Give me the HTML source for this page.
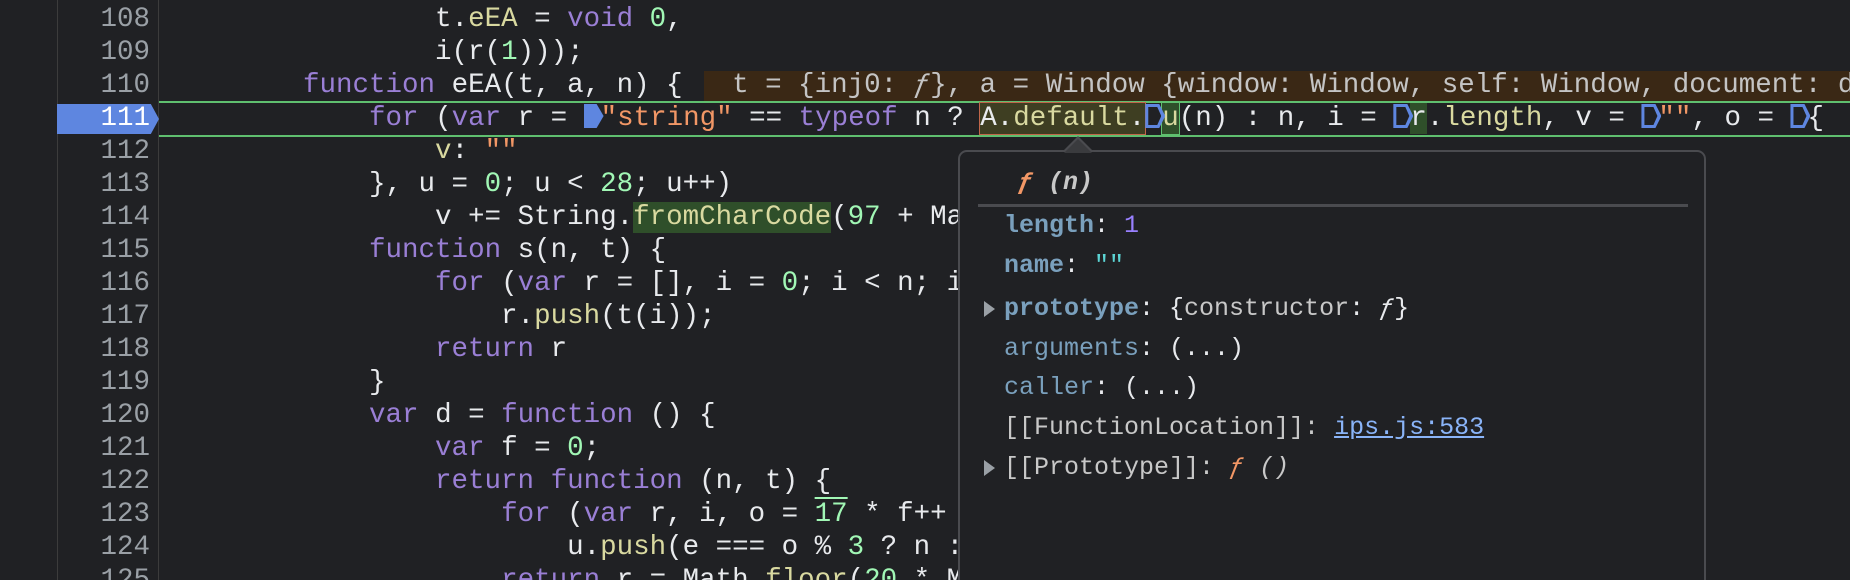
<!DOCTYPE html>
<html style="width:1850px;height:580px;overflow:hidden"><head><meta charset="utf-8"><style>
*{margin:0;padding:0;box-sizing:border-box}
body{width:1850px;height:580px;overflow:hidden;background:#202124;position:relative;font-family:"Liberation Mono",monospace;font-size:27.5px;color:#e8eaed}
.g{position:absolute;left:57px;top:0;width:102px;height:580px;border-left:1px solid #3c3c3c;border-right:1px solid #3c3c3c}
.ln{position:absolute;left:57px;width:93px;text-align:right;color:#9aa0a6;height:33px;line-height:33px}
.l{position:absolute;left:171px;white-space:pre;height:33px;line-height:33px}
.k{color:#9a7fd5}.s{color:#f29766}.p{color:#d9d9a0}.n{color:#a1f7b5}
.m{display:inline-block;width:20px;height:24px;background:#5e86e0;clip-path:polygon(0 0,65% 0,100% 50%,65% 100%,0 100%);vertical-align:-3px;margin-right:-3px}
.mo{display:inline-block;width:20px;height:24px;background:#5e86e0;clip-path:polygon(0 0,70% 0,100% 50%,70% 100%,0 100%,0 0,3px 3px,3px calc(100% - 3px),calc(70% - 2px) calc(100% - 3px),calc(100% - 4px) 50%,calc(70% - 2px) 3px,3px 3px);vertical-align:-3px;margin-right:-3px}
.pop{position:absolute;left:958px;top:150px;width:748px;height:440px;background:#202124;border:2px solid #4a4b4f;border-radius:9px;z-index:5}
.pl{position:absolute;left:44px;white-space:pre;font-size:25px;line-height:30px}
.key{color:#7aa0bd;font-weight:bold}.key2{color:#7aa0bd}
.tri{position:absolute;left:24px;width:0;height:0;border-top:8px solid transparent;border-bottom:8px solid transparent;border-left:11px solid #9aa0a6}
</style></head><body>
<div class="g"></div>
<div style="position:absolute;left:57px;top:104px;width:102px;height:30px;background:#5e86e0;clip-path:polygon(0 0,92% 0,100% 50%,92% 100%,0 100%)"></div>
<div style="position:absolute;left:159px;top:101px;right:0;height:2px;background:#5fbf6f"></div>
<div style="position:absolute;left:159px;top:135px;right:0;height:2px;background:#5fbf6f"></div>
<div style="position:absolute;left:704px;top:71px;right:0;height:30px;background:#3a2815"></div>

<div class="ln" style="top:3px">108</div>
<div class="ln" style="top:36px">109</div>
<div class="ln" style="top:69px">110</div>
<div class="ln" style="top:102px;color:#fff">111</div>
<div class="ln" style="top:135px">112</div>
<div class="ln" style="top:168px">113</div>
<div class="ln" style="top:201px">114</div>
<div class="ln" style="top:234px">115</div>
<div class="ln" style="top:267px">116</div>
<div class="ln" style="top:300px">117</div>
<div class="ln" style="top:333px">118</div>
<div class="ln" style="top:366px">119</div>
<div class="ln" style="top:399px">120</div>
<div class="ln" style="top:432px">121</div>
<div class="ln" style="top:465px">122</div>
<div class="ln" style="top:498px">123</div>
<div class="ln" style="top:531px">124</div>
<div class="ln" style="top:564px">125</div>

<div class="l" style="top:-30px">                i(r(1));</div>
<div class="l" style="top:3px">                t.<span class="p">eEA</span> = <span class="k">void</span> <span class="n">0</span>,</div>
<div class="l" style="top:36px">                i(r(<span class="n">1</span>)));</div>
<div class="l" style="top:69px">        <span class="k">function</span> eEA(t, a, n) {  <span style="color:#c4c4c4"> t = {inj0: <i>ƒ</i>}, a = Window {window: Window, self: Window, document: do</span></div>
<div class="l" style="top:102px">            <span class="k">for</span> (<span class="k">var</span> r = <span class="m"></span><span class="s">"string"</span> == <span class="k">typeof</span> n ? <span style="background:#3e3e22;outline:1px solid #c0664a">A.<span class="p">default</span>.</span><span class="mo"></span><span style="background:#2f4f2a;outline:1px solid #5fbf6f" class="p">u</span>(n) : n, i = <span class="mo"></span><span style="background:#2f4f2a">r</span>.<span class="p">length</span>, v = <span class="mo"></span><span class="s">""</span>, o = <span class="mo"></span>{</div>
<div class="l" style="top:135px">                <span class="p">v</span>: <span class="s">""</span></div>
<div class="l" style="top:168px">            }, u = <span class="n">0</span>; u &lt; <span class="n">28</span>; u++)</div>
<div class="l" style="top:201px">                v += String.<span class="p" style="background:#2f4f2a">fromCharCode</span>(<span class="n">97</span> + Ma</div>
<div class="l" style="top:234px">            <span class="k">function</span> s(n, t) {</div>
<div class="l" style="top:267px">                <span class="k">for</span> (<span class="k">var</span> r = [], i = <span class="n">0</span>; i &lt; n; i</div>
<div class="l" style="top:300px">                    r.<span class="p">push</span>(t(i));</div>
<div class="l" style="top:333px">                <span class="k">return</span> r</div>
<div class="l" style="top:366px">            }</div>
<div class="l" style="top:399px">            <span class="k">var</span> d = <span class="k">function</span> () {</div>
<div class="l" style="top:432px">                <span class="k">var</span> f = <span class="n">0</span>;</div>
<div class="l" style="top:465px">                <span class="k">return</span> <span class="k">function</span> (n, t) {</div>
<div class="l" style="top:498px">                    <span class="k">for</span> (<span class="k">var</span> r, i, o = <span class="n" style="text-decoration:overline">17</span> * f++</div>
<div class="l" style="top:531px">                        u.<span class="p">push</span>(e === o % <span class="n">3</span> ? n :</div>
<div class="l" style="top:564px">                    <span class="k">return</span> r = Math.<span class="p">floor</span>(<span class="n">20</span> * M</div>

<div style="position:absolute;left:1062px;top:136px;width:0;height:0;border-left:16px solid transparent;border-right:16px solid transparent;border-bottom:16px solid #4a4b4f;z-index:6"></div>
<div style="position:absolute;left:1064px;top:139px;width:0;height:0;border-left:14px solid transparent;border-right:14px solid transparent;border-bottom:14px solid #3a3b3e;z-index:6"></div>
<div class="pop">
<div class="pl" style="left:58px;top:16px;font-weight:bold;font-style:italic"><span style="color:#f29766">ƒ</span> <span style="color:#c8c8c8">(n)</span></div>
<div style="position:absolute;left:18px;top:52px;width:710px;height:3px;background:#4a4b4f"></div>
<div class="pl" style="top:59px"><span class="key">length</span>: <span style="color:#9980ff">1</span></div>
<div class="pl" style="top:99px"><span class="key">name</span>: <span style="color:#5cd5d5">""</span></div>
<div class="tri" style="top:149px"></div>
<div class="pl" style="top:142px"><span class="key">prototype</span>: {<span style="color:#c8c8c8">constructor</span>: <i>ƒ</i>}</div>
<div class="pl" style="top:182px"><span class="key2">arguments</span>: (...)</div>
<div class="pl" style="top:221px"><span class="key2">caller</span>: (...)</div>
<div class="pl" style="top:261px;color:#c8c8c8">[[FunctionLocation]]: <span style="color:#8ab4f8;text-decoration:underline">ips.js:583</span></div>
<div class="tri" style="top:308px"></div>
<div class="pl" style="top:301px;color:#c8c8c8">[[Prototype]]: <i style="color:#f29766">ƒ</i> <i>()</i></div>
</div>
</body></html>
